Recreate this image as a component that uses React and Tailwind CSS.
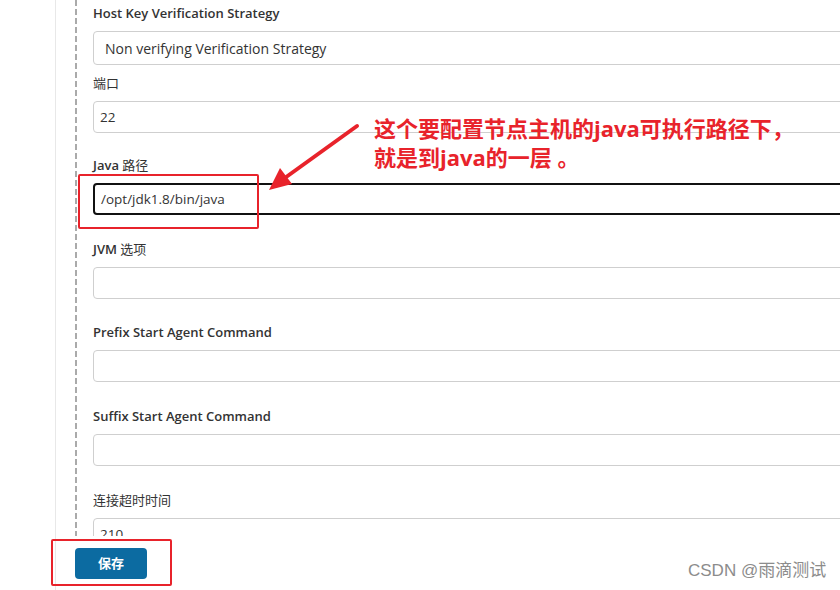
const font = { fontFamily: '"Open Sans", "Noto Sans CJK SC", sans-serif' }

function Label({ children, cjk, className = '' }) {
  return (
    <div
      className={`text-[13px] leading-[18px] text-[#333] ${cjk ? 'font-normal' : 'font-semibold'} ${className}`}
    >
      {children}
    </div>
  )
}

function Field({ value, focused, className = '' }) {
  return (
    <div
      className={`w-[800px] h-[32px] mt-[9px] rounded-[4px] flex items-center px-[6px] text-[13.5px] text-[#333] bg-white ${
        focused ? 'border-2 border-[#111]' : 'border border-[#cfcfcf]'
      } ${className}`}
    >
      {value}
    </div>
  )
}

export default function App() {
  return (
    <div
      className="relative w-[840px] h-[590px] overflow-hidden bg-white flex"
      style={font}
    >
      <div className="w-[55px] shrink-0" />
      <div className="flex-1 flex flex-col border-l border-[#e8e8e8]">
        <div className="h-[536px] overflow-hidden pl-[19px] flex">
          <div className="w-[2px] shrink-0 bg-[repeating-linear-gradient(to_bottom,#aaaaaa_0_6px,transparent_6px_9px)]" />
          <div className="pl-[16px] pt-[4px] flex-1">
            <Label>Host Key Verification Strategy</Label>
            <div className="w-[800px] h-[34px] mt-[9px] rounded-[4px] border border-[#cfcfcf] flex items-center px-[11px] text-[14px] text-[#333]">
              Non verifying Verification Strategy
            </div>

            <Label cjk className="mt-[9px]">端口</Label>
            <Field value="22" />

            <Label className="mt-[23px]">
              Java <span className="font-normal">路径</span>
            </Label>
            <Field value="/opt/jdk1.8/bin/java" focused />

            <Label className="mt-[25px]">
              JVM <span className="font-normal">选项</span>
            </Label>
            <Field />

            <Label className="mt-[24px]">Prefix Start Agent Command</Label>
            <Field />

            <Label className="mt-[25px]">Suffix Start Agent Command</Label>
            <Field />

            <Label cjk className="mt-[25px]">连接超时时间</Label>
            <Field value="210" />
          </div>
        </div>
        <div className="pl-[19px] pt-[12px]">
          <button className="w-[72px] h-[31px] rounded-[4px] bg-[#0c6ba1] text-white text-[13px] font-bold">
            保存
          </button>
        </div>
      </div>

      {/* annotations */}
      <div className="absolute left-[78px] top-[174px] w-[181px] h-[55px] border-2 border-[#e8232b] rounded-[2px]" />
      <div className="absolute left-[51px] top-[539px] w-[121px] h-[47px] border-2 border-[#e8232b] rounded-[2px]" />
      <svg className="absolute left-0 top-0" width="840" height="590">
        <line x1="357" y1="126" x2="282" y2="180" stroke="#e8232b" strokeWidth="4" strokeLinecap="round" />
        <polygon points="269,190 280,168 292,184" fill="#e8232b" />
      </svg>
      <div className="absolute left-[374px] top-[114px] text-[22px] leading-[29px] font-bold text-[#e8232b]">
        <div>这个要配置节点主机的java可执行路径下，</div>
        <div>就是到java的一层 。</div>
      </div>
      <div
        className="absolute left-[688px] top-[560px] text-[17px] leading-[22px] text-[#8c8c8c]"
        style={{ fontFamily: '"Liberation Sans", "Noto Sans CJK SC", sans-serif' }}
      >
        CSDN @雨滴测试
      </div>
    </div>
  )
}
